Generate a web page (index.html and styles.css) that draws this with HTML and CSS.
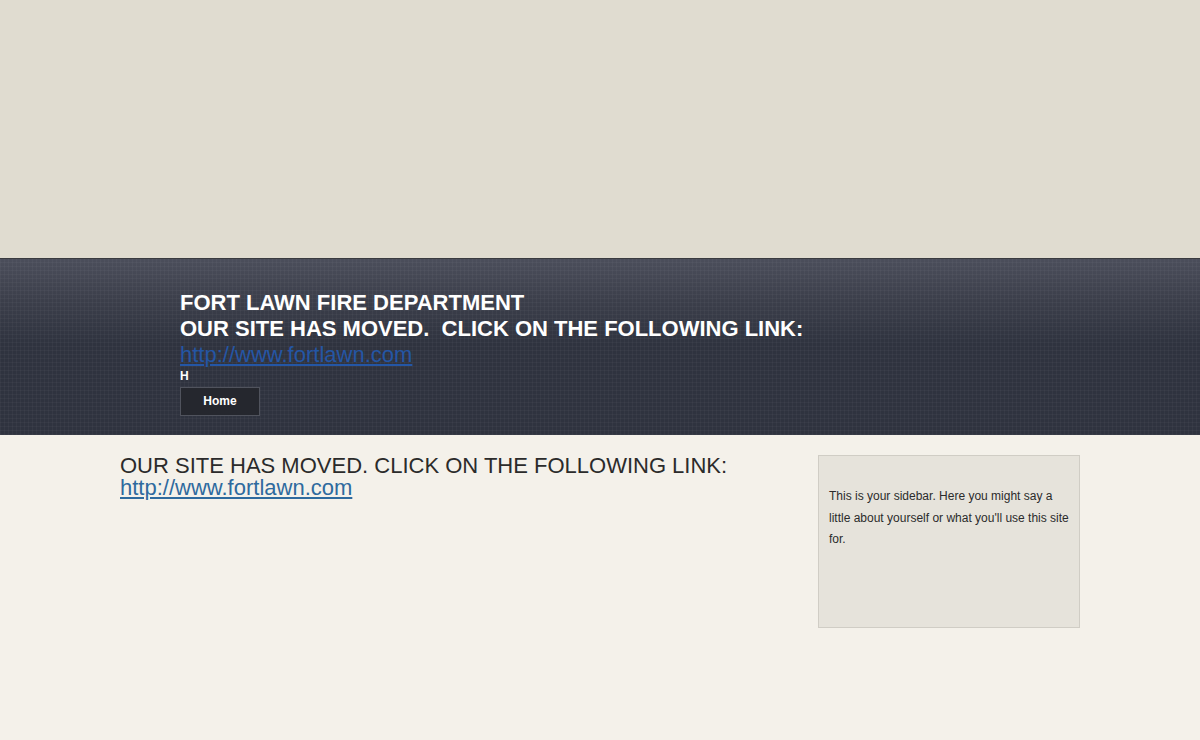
FILE: index.html
```html
<!DOCTYPE html>
<html lang="en">
<head>
    <meta charset="UTF-8">
    <meta name="viewport" content="width=device-width, initial-scale=1.0">
    <title>Fort Lawn Fire Department</title>
    <link rel="stylesheet" href="styles.css">
</head>
<body>

    <!-- Banner area -->
    <div class="top-band"></div>

    <!-- Header with title and nav -->
    <div class="site-header">
        <div class="header-inner">
            <h1 class="site-title">FORT LAWN FIRE DEPARTMENT<br>OUR SITE HAS MOVED.&nbsp; CLICK ON THE FOLLOWING LINK:<br><a href="#" class="header-link">http://www.fortlawn.com</a></h1>
            <div class="tagline">H</div>
            <div class="nav">
                <a href="#" class="nav-btn">Home</a>
            </div>
        </div>
    </div>

    <!-- Page content -->
    <div class="content">
        <div class="main">
            <p class="moved">OUR SITE HAS MOVED. CLICK ON THE FOLLOWING LINK:<br><a href="#">http://www.fortlawn.com</a></p>
        </div>

        <div class="sidebar">
            <p>This is your sidebar. Here you might say a little about yourself or what you'll use this site for.</p>
        </div>
    </div>

</body>
</html>
```

FILE: styles.css
```css
body {
    font-family: Arial, "Liberation Sans", sans-serif;
    background-color: #f4f1ea;
    margin: 0;
    padding: 0;
    color: #2b2b2b;
}
.top-band {
    height: 258px;
    background-color: #e0dcd0;
}
.site-header {
    border-top: 1px solid #3a3b3f;
    background-color: #2f333f;
    background-image:
        repeating-linear-gradient(90deg, rgba(255,255,255,0.03) 0 1px, transparent 1px 4px),
        repeating-linear-gradient(0deg, rgba(255,255,255,0.03) 0 1px, transparent 1px 4px),
        linear-gradient(#4b4e5b 0px, #3c3f4b 40px, #2f333f 85px, #2f333f 100%);
    height: 176px;
}
.header-inner {
    width: 900px;
    margin: 0 auto;
    padding: 31px 0 0 60px;
}
.site-title {
    font-size: 22px;
    line-height: 26px;
    font-weight: bold;
    color: #fff;
    margin: 0;
}
.header-link {
    font-weight: normal;
    color: #2456a5;
    line-height: 22px;
}
.tagline {
    color: #fff;
    font-size: 12px;
    font-weight: bold;
    line-height: 14px;
    margin-top: 1px;
}
.nav {
    margin-top: 4px;
}
.nav-btn {
    display: inline-block;
    width: 78px;
    height: 27px;
    line-height: 26px;
    text-align: center;
    background-color: #25272e;
    border: 1px solid #50535d;
    color: #fff;
    font-size: 12px;
    font-weight: bold;
    text-decoration: none;
}
.content {
    width: 960px;
    margin: 0 auto;
    padding-top: 20px;
    display: flex;
    justify-content: space-between;
}
.moved {
    font-size: 22px;
    line-height: 22px;
    margin: 0;
    color: #2b2b2b;
}
.moved a {
    color: #2e6a9e;
}
.sidebar {
    width: 245px;
    height: 141px;
    padding: 30px 5px 0 10px;
    background-color: #e6e3db;
    border: 1px solid #d0cdc5;
}
.sidebar p {
    font-size: 12px;
    line-height: 21.6px;
    margin: 0;
    color: #2b2b2b;
}
```
